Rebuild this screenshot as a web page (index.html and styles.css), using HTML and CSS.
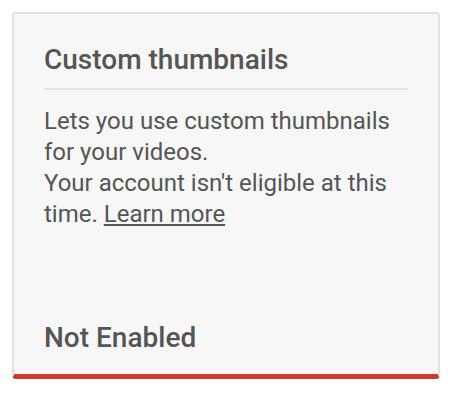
FILE: index.html
```html
<!DOCTYPE html>
<html>
<head>
<meta charset="utf-8">
<link rel="stylesheet" href="styles.css">
</head>
<body>
<div class="card">
  <div class="card-head">
    <h2 class="card-title">Custom thumbnails</h2>
  </div>
  <div class="card-body">
    <p class="desc">Lets you use custom thumbnails for your videos.</p>
    <p class="desc">Your account isn't eligible at this time. <a class="link" href="#">Learn more</a></p>
  </div>
  <div class="card-status">Not Enabled</div>
</div>
</body>
</html>
```
FILE: styles.css
```css
html, body {
  margin: 0;
  padding: 0;
  background: #ffffff;
}
body {
  font-family: Roboto, "Liberation Sans", sans-serif;
  color: #555555;
}
.card {
  box-sizing: border-box;
  margin: 12px 0 0 12px;
  width: 428px;
  height: 367px;
  background: #f7f7f7;
  border: 2px solid #e2e2e2;
  border-bottom: 5px solid #d33a2c;
  border-radius: 4px;
  padding: 0 30px;
  display: flex;
  flex-direction: column;
}
.card-head {
  border-bottom: 2px solid #e4e4e4;
  padding: 30px 0 12px;
}
.card-title {
  margin: 0;
  font-size: 28px;
  line-height: 32px;
  font-weight: 500;
  color: #555555;
}
.card-body {
  padding-top: 16px;
  flex: 1;
}
.desc {
  margin: 0;
  font-size: 24px;
  line-height: 31px;
}
.link {
  color: #555555;
  text-decoration: underline;
}
.card-status {
  font-size: 28px;
  line-height: 32px;
  font-weight: 500;
  padding-bottom: 20px;
}
```
